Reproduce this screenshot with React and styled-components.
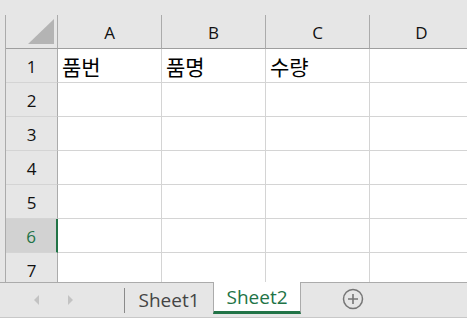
import React from 'react'
import styled, { createGlobalStyle } from 'styled-components'

const Global = createGlobalStyle`
  html, body {
    margin: 0;
    padding: 0;
    background: #e6e6e6;
  }
`

const Window = styled.div`
  width: 467px;
  height: 318px;
  display: flex;
  flex-direction: column;
  overflow: hidden;
  background: #e6e6e6;
  font-family: "Open Sans", "Noto Sans", sans-serif;
`

const TopBand = styled.div`
  height: 15px;
  flex: none;
`

const SheetArea = styled.div`
  flex: 1;
  overflow: hidden;
  padding-left: 5px;
`

const Grid = styled.div`
  display: grid;
  grid-template-columns: 52px repeat(4, 104px);
  grid-auto-rows: 34px;
  border-left: 1px solid #ababab;
`

const Corner = styled.div`
  position: relative;
  border-right: 1px solid #ababab;
  border-bottom: 1px solid #9e9e9e;
`

const Triangle = styled.div`
  position: absolute;
  right: 3px;
  bottom: 4px;
  width: 26px;
  height: 25px;
  background: #b4b4b4;
  clip-path: polygon(100% 0, 100% 100%, 0 100%);
`

const ColHead = styled.div`
  display: flex;
  align-items: center;
  justify-content: center;
  border-right: 1px solid #ababab;
  border-bottom: 1px solid #9e9e9e;
  font-size: 17px;
  color: #111;
  padding-top: 1px;
`

const RowHead = styled.div`
  display: flex;
  align-items: center;
  justify-content: center;
  background: ${p => (p.$active ? '#d2d2d2' : '#e6e6e6')};
  color: ${p => (p.$active ? '#217346' : '#111')};
  border-right: ${p => (p.$active ? '2px solid #217346' : '1px solid #ababab')};
  border-bottom: 1px solid #d4d4d4;
  font-size: 17px;
  padding-top: 1px;
`

const Cell = styled.div`
  background: #fff;
  border-right: 1px solid #d4d4d4;
  border-bottom: 1px solid #d4d4d4;
  display: flex;
  align-items: flex-end;
  padding: 0 0 3px 4px;
  font-family: "Noto Sans CJK KR", "Noto Sans", sans-serif;
  font-size: 21px;
  line-height: 1.2;
  color: #000;
  white-space: nowrap;
`

const TabBar = styled.div`
  height: 34px;
  flex: none;
  display: flex;
  align-items: stretch;
  border-top: 1px solid #ababab;
  border-bottom: 1px solid #c8c8c8;
`

const Nav = styled.div`
  width: 124px;
  display: flex;
  align-items: center;
  padding-left: 34px;
  gap: 29px;
  box-sizing: border-box;
`

const Arrow = styled.span`
  width: 0;
  height: 0;
  border-top: 5px solid transparent;
  border-bottom: 5px solid transparent;
  ${p => (p.$dir === 'left'
    ? 'border-right: 5px solid #c3c3c3;'
    : 'border-left: 5px solid #c3c3c3;')}
`

const Divider = styled.div`
  width: 1px;
  height: 25px;
  align-self: center;
  background: #8a8a8a;
`

const Tab = styled.div`
  width: 88px;
  display: flex;
  align-items: center;
  justify-content: center;
  font-size: 19px;
  box-sizing: border-box;
  color: ${p => (p.$active ? '#217346' : '#444')};
  ${p => p.$active && `
    background: #fff;
    margin-top: -1px;
    margin-bottom: 3px;
    border-left: 1px solid #ababab;
    border-right: 1px solid #ababab;
    border-bottom: 3px solid #217346;
    padding-top: 1px;
  `}
`

const AddButton = styled.div`
  margin-left: 41px;
  display: flex;
  align-items: center;
  padding-bottom: 2px;
`

const cols = ['A', 'B', 'C', 'D']
const rows = [
  ['품번', '품명', '수량', ''],
  ['', '', '', ''],
  ['', '', '', ''],
  ['', '', '', ''],
  ['', '', '', ''],
  ['', '', '', ''],
  ['', '', '', ''],
]

export default function App() {
  return (
    <Window>
      <Global />
      <TopBand />
      <SheetArea>
        <Grid>
          <Corner><Triangle /></Corner>
          {cols.map(c => <ColHead key={c}>{c}</ColHead>)}
          {rows.map((r, i) => (
            <React.Fragment key={i}>
              <RowHead $active={i === 5}>{i + 1}</RowHead>
              {r.map((v, j) => <Cell key={j}>{v}</Cell>)}
            </React.Fragment>
          ))}
        </Grid>
      </SheetArea>
      <TabBar>
        <Nav>
          <Arrow $dir="left" />
          <Arrow $dir="right" />
        </Nav>
        <Divider />
        <Tab>Sheet1</Tab>
        <Tab $active>Sheet2</Tab>
        <AddButton>
          <svg width="22" height="22" viewBox="0 0 22 22">
            <circle cx="11" cy="11" r="9.5" fill="none" stroke="#767676" strokeWidth="1.5" />
            <path d="M11 6v10M6 11h10" stroke="#767676" strokeWidth="1.6" />
          </svg>
        </AddButton>
      </TabBar>
    </Window>
  )
}
